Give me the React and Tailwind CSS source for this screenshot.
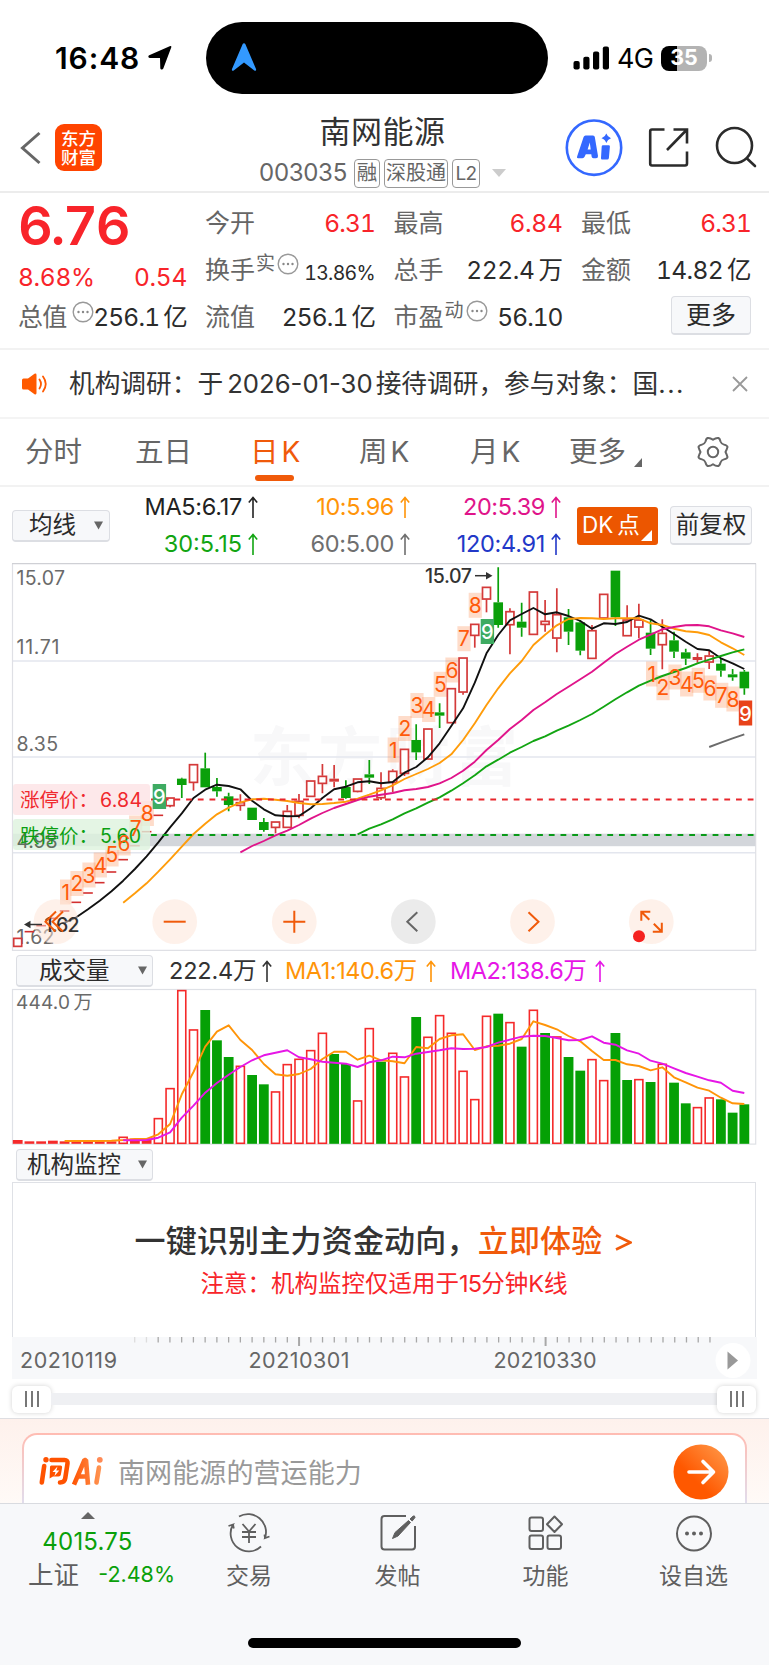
import React from "react";

const STEP = 11.72;
const cx = (i) => 17.7 + STEP * i;
const py = (v) => 560 + v / 3;
const vy = (v) => 940 + v / 3;

// [index, direction, high, bodyTop, bodyBottom, low]
const CANDLES = [
  [0, "r", 1133, 1133, 1160, 1160],
  [13, "r", 712, 712, 738, 742],
  [14, "g", 653, 656, 675, 714],
  [15, "r", 612, 612, 668, 692],
  [16, "g", 578, 625, 682, 682],
  [17, "g", 654, 681, 694, 710],
  [18, "g", 698, 709, 735, 754],
  [19, "r", 703, 726, 737, 752],
  [20, "g", 743, 743, 780, 780],
  [21, "g", 774, 786, 810, 815],
  [22, "r", 784, 784, 803, 820],
  [23, "r", 735, 752, 803, 803],
  [24, "r", 702, 722, 767, 775],
  [25, "r", 661, 661, 710, 710],
  [26, "r", 612, 647, 671, 700],
  [27, "s", 615, 656, 665, 682],
  [28, "g", 661, 681, 714, 716],
  [29, "r", 655, 655, 695, 697],
  [30, "g", 600, 643, 653, 672],
  [31, "r", 637, 683, 714, 720],
  [32, "r", 628, 632, 668, 696],
  [33, "r", 566, 566, 641, 648],
  [34, "g", 493, 540, 577, 600],
  [35, "r", 505, 505, 598, 598],
  [36, "g", 430, 457, 467, 504],
  [37, "r", 384, 384, 489, 489],
  [38, "r", 292, 292, 397, 404],
  [39, "r", 191, 191, 227, 263],
  [40, "r", 80, 80, 118, 157],
  [41, "g", 22, 127, 195, 203],
  [42, "r", 145, 153, 195, 283],
  [43, "g", 128, 185, 203, 230],
  [44, "r", 94, 94, 224, 224],
  [45, "r", 120, 182, 194, 215],
  [46, "r", 85, 162, 235, 277],
  [47, "g", 147, 172, 215, 255],
  [48, "g", 180, 187, 272, 286],
  [49, "r", 195, 210, 296, 296],
  [50, "r", 101, 101, 175, 175],
  [51, "g", 32, 32, 172, 198],
  [52, "r", 136, 178, 228, 228],
  [53, "r", 131, 178, 202, 235],
  [54, "g", 180, 218, 266, 285],
  [55, "r", 178, 218, 255, 328],
  [56, "g", 215, 241, 275, 294],
  [57, "g", 266, 277, 296, 315],
  [58, "s", 280, 291, 300, 308],
  [59, "r", 272, 286, 307, 327],
  [60, "g", 295, 311, 332, 350],
  [61, "g", 327, 343, 352, 362],
  [62, "g", 330, 335, 385, 404],
];

const FLAT = [1115, 1097, 1075, 1053, 1027, 999, 968, 936, 899, 857, 815, 766];

const MA = [
  { c: "#111111", s: 4, v: [1088, 1072, 1048, 1022, 994, 962, 927, 889, 847, 802, 760, 714, 689, 674, 678, 688, 722, 748, 766, 769, 768, 745, 714, 688, 680, 667, 664, 670, 666, 638, 621, 592, 550, 498, 445, 368, 280, 225, 181, 162, 144, 163, 157, 168, 183, 206, 190, 192, 186, 167, 178, 200, 222, 245, 267, 271, 295, 310, 327] },
  { c: "#ff9c0a", s: 9, v: [1028, 1000, 970, 935, 898, 860, 822, 791, 763, 743, 727, 718, 716, 719, 723, 729, 733, 732, 729, 725, 716, 704, 691, 676, 657, 642, 627, 609, 583, 540, 490, 435, 385, 340, 303, 255, 224, 196, 177, 174, 175, 177, 175, 175, 175, 190, 195, 206, 214, 217, 225, 247, 265, 285] },
  { c: "#e0148a", s: 19, v: [877, 858, 843, 826, 812, 795, 776, 759, 744, 732, 720, 710, 704, 699, 691, 687, 681, 670, 654, 632, 605, 570, 540, 507, 480, 450, 427, 402, 380, 358, 335, 308, 282, 260, 239, 224, 208, 201, 196, 195, 199, 211, 220, 231] },
  { c: "#12a512", s: 29, v: [823, 806, 793, 778, 760, 745, 728, 712, 692, 670, 646, 619, 599, 578, 561, 543, 529, 512, 497, 480, 462, 440, 418, 397, 377, 362, 348, 336, 324, 310, 299, 288, 277, 268] },
  { c: "#6b6b6b", s: 59, v: [561, 548, 535, 523] },
];

const VOL = [
  ["s", 600], ["s", 604], ["s", 604], ["s", 602], ["s", 604], ["s", 604], ["s", 604], ["s", 604], ["s", 604], ["r", 591],
  ["s", 596], ["s", 598], ["r", 535], ["r", 445], ["r", 151], ["r", 269], ["g", 210], ["g", 301], ["g", 351], ["r", 378],
  ["g", 405], ["g", 433], ["r", 455], ["r", 373], ["r", 357], ["r", 331], ["r", 279], ["g", 342], ["g", 372], ["r", 482],
  ["r", 265], ["g", 365], ["r", 339], ["r", 410], ["g", 231], ["r", 291], ["r", 226], ["r", 279], ["r", 393], ["r", 478],
  ["r", 228], ["g", 221], ["r", 247], ["g", 320], ["r", 210], ["g", 279], ["r", 290], ["g", 351], ["g", 392], ["r", 358],
  ["r", 421], ["g", 279], ["g", 420], ["r", 418], ["g", 426], ["r", 372], ["g", 428], ["g", 490], ["r", 502], ["r", 473],
  ["g", 478], ["g", 518], ["g", 493],
];

const VMA = [
  { c: "#ff9408", s: 4, v: [603, 603, 603, 603, 602, 600, 597, 597, 583, 552, 463, 396, 320, 275, 256, 300, 330, 372, 403, 407, 402, 387, 357, 335, 335, 359, 347, 361, 364, 370, 321, 325, 297, 286, 283, 330, 319, 317, 311, 297, 244, 255, 268, 288, 304, 333, 360, 360, 373, 378, 391, 382, 412, 427, 443, 452, 473, 490, 492] },
  { c: "#e616e6", s: 9, v: [601, 601, 600, 593, 577, 533, 497, 458, 429, 404, 381, 361, 346, 338, 331, 352, 358, 365, 368, 371, 381, 367, 361, 350, 352, 341, 336, 331, 325, 327, 326, 321, 308, 299, 290, 287, 288, 294, 301, 300, 289, 308, 314, 331, 341, 362, 371, 385, 399, 410, 421, 428, 452, 459] },
];

// [text, centre x, centre y]
const SEQ = [
  ["1", 65.7, 892], ["2", 77, 883.5], ["3", 89, 875], ["4", 100.3, 865], ["5", 112, 854], ["6", 124, 843], ["7", 135.7, 828], ["8", 147.3, 813.5],
  ["1", 393.3, 750], ["2", 405, 728.5], ["3", 417, 705.5], ["4", 428.7, 709.5], ["5", 440.3, 684.3], ["6", 452, 670], ["7", 464, 638.7], ["8", 475.3, 605.3],
  ["1", 651.7, 674], ["2", 663, 687.7], ["3", 675, 677], ["4", 686.7, 684], ["5", 698.3, 680.3], ["6", 710, 688], ["7", 721.7, 695.3], ["8", 733, 699],
];

const line = (m, f) => m.v.map((v, k) => `${cx(m.s + k).toFixed(1)},${f(v).toFixed(1)}`).join(" ");

function Round({ x, y = 921.7, fill = "#fef0e9", children }) {
  return (
    <g transform={`translate(${x} ${y})`} fill="none" strokeWidth="2" stroke="#f05a0a">
      <circle r="22.4" fill={fill} stroke="none" fillOpacity="0.94" />
      {children}
    </g>
  );
}

function PriceChart() {
  return (
    <svg viewBox="0 562 769 390" width="769" height="390" className="block shrink-0">
      <g fill="#f8f8f9" fontWeight="700" fontSize="64" fontFamily="'Noto Sans CJK SC'">
        <text x="250" y="780" textLength="268">东方财富</text>
      </g>
      <g stroke="#e3e6ee" strokeWidth="1.6">
        <path d="M12.5 661H756M12.5 757H756M12.5 852.8H756" />
      </g>
      <path d="M12.5 563.5V950.3H755.7V563.5" fill="none" stroke="#dfe0e5" strokeWidth="1.2" />
      <path d="M12 563.6H756" stroke="#cfd0d5" strokeWidth="1.3" />
      <rect x="13" y="833.7" width="742.5" height="12.5" fill="#d3d6db" />
      <g fill="#6a6a6a" fontSize="19.5">
        <text x="16.500" y="585.3" textLength="48.5">15.07</text>
        <text x="16.500" y="654.3" textLength="43">11.71</text>
        <text x="16.500" y="751.3" textLength="41.5">8.35</text>
        <text x="16.500" y="943.8" textLength="38">1.62</text>
      </g>
      {SEQ.map(([t, x, y], k) => (
        <rect key={k} x={x - (t === "1" ? 5.7 : 6.6)} y={y - 12.5} width={t === "1" ? 11.4 : 13.2} height="25" fill="#fb7c3c" fillOpacity="0.27" />
      ))}
      {FLAT.map((v, k) => (
        <path key={k} d={`M${cx(k + 1) - 4.8} ${py(v)}h9.6`} stroke="#d32f2f" strokeWidth="1.6" />
      ))}
      {CANDLES.map(([i, d, h, t, b, l]) => {
        const x = cx(i);
        const col = d === "g" ? "#0aa00a" : "#d43a3a";
        return (
          <g key={i} stroke={col} strokeWidth="1.7">
            <path d={`M${x} ${py(h)}V${py(t)}M${x} ${py(b)}V${py(l)}`} />
            {d === "r" ? (
              <rect x={x - 4} y={py(t) + 0.7} width="8" height={(b - t) / 3 - 1} fill="#fff" />
            ) : (
              <rect x={x - 4.8} y={py(t)} width="9.6" height={(b - t) / 3} fill={col} stroke="none" />
            )}
          </g>
        );
      })}
      {MA.map((m) => (
        <polyline key={m.c} points={line(m, py)} fill="none" stroke={m.c} strokeWidth="1.9" strokeLinejoin="round" />
      ))}
      <rect x="13" y="784" width="137" height="31" rx="3" fill="#fde4e6" fillOpacity="0.85" />
      <rect x="13" y="819" width="137" height="31" rx="3" fill="#ddf3dd" fillOpacity="0.8" />
      <text x="16.500" y="847.5" fill="#5f6f5f" fontSize="19.5" textLength="41">4.98</text>
      <path d="M151 799.5H755" stroke="#e8262c" strokeWidth="1.8" strokeDasharray="5.8 5.9" />
      <path d="M151 835H755" stroke="#0a9a1a" strokeWidth="1.8" strokeDasharray="5.8 5.9" />
      <g fontSize="19.5">
        <text x="20" y="807" fill="#f0282d">涨停价：</text>
        <text x="100" y="807" fill="#f0282d" textLength="42">6.84</text>
        <text x="20" y="843" fill="#0a9f12">跌停价：</text>
        <text x="100" y="843" fill="#0a9f12" textLength="41">5.60</text>
      </g>
      <g fontSize="21" fill="#ff5a0a" textAnchor="middle">
        {SEQ.map(([t, x, y], k) => (
          <text key={k} x={x} y={y + 7.5}>{t}</text>
        ))}
      </g>
      <rect x="152.7" y="784" width="13.4" height="25" fill="#3eab62" />
      <rect x="480.7" y="619" width="13.4" height="25" fill="#3eab62" />
      <rect x="738.8" y="700.5" width="13.4" height="25" fill="#e8431a" />
      <g fontSize="20" fill="#fff" textAnchor="middle" fontWeight="500">
        <text x="159.4" y="803.5">9</text>
        <text x="487.4" y="639">9</text>
        <text x="745.5" y="720.5">9</text>
      </g>
      <text x="425" y="583" fontSize="19.5" fontWeight="500" fill="#333" textLength="47">15.07</text>
      <path d="M475 575.7H490" stroke="#333" strokeWidth="1.5" />
      <path d="M486 572l6.500 3.7-6.500 3.7z" fill="#333" />
      <circle cx="56" cy="921.7" r="22.4" fill="#fde3d6" fillOpacity="0.5" />
      <text x="44.500" y="931.5" fontSize="19.5" fontWeight="500" fill="#333" textLength="35">1.62</text>
      <path d="M28 924.5H42" stroke="#333" strokeWidth="1.5" />
      <path d="M30.500 920.7l-6.500 3.8 6.500 3.8z" fill="#333" />
      <g stroke="#f05a0a" strokeWidth="2" fill="none">
        <path d="M56 911.5L45.500 921.7L55.500 931.500M63 911.5L52.500 921.7L63 931.500" />
      </g>
      <Round x={174.7}><path d="M-11 0H11" /></Round>
      <Round x={294.3}><path d="M-11 0H11M0 -11V11" /></Round>
      <Round x={413.3} fill="#eaeaea"><path d="M4 -9.5L-6 0L4 9.5" stroke="#666" /></Round>
      <Round x={532.5}><path d="M-4 -9.5L6 0L-4 9.5" /></Round>
      <Round x={651.3}><path d="M-10 -1V-10H-1M-10 -10L-2 -2M10.500 1V10H1.500M10.500 10L2.500 2" /></Round>
      <circle cx="639" cy="936.2" r="6" fill="#f5221f" />
    </svg>
  );
}

function VolumeChart() {
  return (
    <svg viewBox="0 988 769 158" width="769" height="158" className="block shrink-0">
      <rect x="12.5" y="989.5" width="743.2" height="154.6" fill="none" stroke="#dfe1e6" strokeWidth="1.2" />
      <text x="16" y="1008.500" fontSize="19" fill="#6a6a6a" textLength="54">444.0</text>
      <text x="73.500" y="1008.500" fontSize="19" fill="#6a6a6a">万</text>
      {VOL.map(([d, t], i) => {
        const x = cx(i);
        const y = vy(t);
        if (d === "r") return <rect key={i} x={x - 4} y={y + 0.3} width="8" height={1143 - y} fill="#fff" stroke="#f52a2a" strokeWidth="1.6" />;
        return <rect key={i} x={x - 4.9} y={y} width="9.8" height={1143.800 - y} fill={d === "g" ? "#05a005" : "#f52a2a"} />;
      })}
      {VMA.map((m) => (
        <polyline key={m.c} points={line(m, vy)} fill="none" stroke={m.c} strokeWidth="1.9" strokeLinejoin="round" />
      ))}
    </svg>
  );
}

function Dots() {
  return (
    <svg width="22" height="22" viewBox="0 0 22 22" className="block shrink-0">
      <circle cx="11" cy="11" r="9.8" fill="none" stroke="#999" strokeWidth="1.4" />
      <circle cx="6.500" cy="11" r="1.2" fill="#888" />
      <circle cx="11" cy="11" r="1.2" fill="#888" />
      <circle cx="15.500" cy="11" r="1.2" fill="#888" />
    </svg>
  );
}

function Cell({ label, sup, dots, value, unit, valueClass }) {
  return (
    <div className="flex h-full items-center justify-between whitespace-nowrap">
      <span className="flex items-center text-[25px] leading-none text-[#666]">
        {label}
        {sup && <span className="mb-[14px] ml-[1px] text-[19px] leading-none">{sup}</span>}
        {dots && <span className={sup ? "mb-[14px] ml-[2px] -mr-8" : "mb-[11px] ml-[6px] -mr-8"}><Dots /></span>}
      </span>
      <span className={valueClass}>{value}{unit && <span className="ml-[4px]">{unit}</span>}</span>
    </div>
  );
}

const DARK = "text-[24.5px] leading-none text-[#2b2b2b]";
const RED = "text-[24.5px] leading-none text-[#f8242a]";

function Dropdown({ className, children }) {
  return (
    <div className={"flex shrink-0 items-center justify-between rounded-[4px] border border-[#dcdee3] border-b-2 bg-[#f7f8fa] text-[#2b2b2b] " + className}>
      {children}
      <svg width="9" height="9" viewBox="0 0 9 9" className="block"><path d="M0 .5H9L4.500 8.500z" fill="#666" /></svg>
    </div>
  );
}

function Up() {
  return (
    <svg width="10" height="22" viewBox="0 0 10 22" fill="none" stroke="currentColor" strokeWidth="1.600" className="ml-[6px] block shrink-0">
      <path d="M5 22V1.500M.8 6.500L5 1.500L9.200 6.500" />
    </svg>
  );
}

function MaValue({ className, children }) {
  return (
    <span className={"flex items-center justify-end whitespace-nowrap text-[23.5px] leading-none " + className}>
      {children}
      <Up />
    </span>
  );
}

function Tab({ className, children }) {
  return <div className={"flex h-full items-center whitespace-nowrap text-[28.5px] leading-none text-[#666] " + className}>{children}</div>;
}

function Handle() {
  return (
    <div className="flex h-[27px] w-[39px] items-center justify-center gap-[4px] rounded-[6px] bg-white shadow-[0_0_5px_rgba(0,0,0,0.18)]">
      <i className="h-[16px] w-[2px] bg-[#777]" />
      <i className="h-[16px] w-[2px] bg-[#777]" />
      <i className="h-[16px] w-[2px] bg-[#777]" />
    </div>
  );
}

const TICKS = Array.from({ length: 50 }, (_, k) => 134.700 + k * 11.740);

export default function App() {
  return (
    <div className="flex h-[1665px] w-[769px] flex-col overflow-hidden bg-white font-['Inter','Noto_Sans_CJK_SC',sans-serif]">
      {/* status bar */}
      <div className="flex h-[116px] shrink-0 pt-[22px]">
        <div className="flex h-[72px] w-[206px] items-center pl-[55px]">
          <span className="w-[93px] text-[30px] font-semibold leading-none tracking-[0.900px] text-black">16:48</span>
          <svg width="24" height="24" viewBox="0 0 24 24" className="mb-[1px] block"><path d="M23.300 1.200L15.300 22.500c-.5 1.400-2.900 1.200-3-.3L12 12H1.800C.1 12-.1 9.900 1.200 9.200L21.700.2c1.100-.5 2 .1 1.600 1z" fill="#000" /></svg>
        </div>
        <div className="flex h-[72px] w-[342px] items-center rounded-[36px] bg-black pl-[24.500px]">
          <svg width="26" height="28" viewBox="0 0 26 28" className="mb-[2px] block"><path d="M11.700 1c.5-1.100 2.100-1.100 2.600 0L25 26c.5 1.400-.6 2.300-1.700 1.400L13 19.500 2.700 27.400C1.600 28.300.5 27.400 1 26z" fill="#3399ff" /></svg>
        </div>
        <div className="flex h-[72px] items-center pl-[24.500px]">
          <svg width="37" height="24" viewBox="0 0 37 24" className="block">
            <rect x=".5" y="15" width="6.200" height="8.500" rx="2" /><rect x="10.300" y="10.800" width="6.200" height="12.700" rx="2" /><rect x="20" y="5.500" width="6.200" height="18" rx="2" /><rect x="29.800" y=".5" width="6.200" height="23" rx="2" />
          </svg>
          <span className="ml-[7.500px] w-[37px] text-[27px] leading-none tracking-[-0.700px]">4G</span>
          <div className="ml-[7px] flex h-[25px] w-[46px] items-center justify-center rounded-[8px] bg-[linear-gradient(90deg,#000_35%,#b3b3b3_35%)] text-[21.500px] font-bold leading-none text-white">35</div>
          <span className="ml-[1.500px] h-[8px] w-[3px] rounded-r-full bg-[#b3b3b3]" />
        </div>
      </div>

      {/* title bar */}
      <div className="flex h-[77px] shrink-0 border-b-[2px] border-[#ececec]">
        <div className="flex w-[232px] items-center pl-[20px] pb-[14px] pt-[2px]">
          <svg width="22" height="34" viewBox="0 0 22 34" className="block"><path d="M19.500 2L2.500 17L19.500 32" fill="none" stroke="#666" strokeWidth="3" /></svg>
          <div className="ml-[13px] flex h-[47px] w-[47px] flex-col items-center justify-center rounded-[9px] bg-[#ff4400] text-[17.500px] font-medium leading-[19px] text-white">
            <span>东方</span><span>财富</span>
          </div>
        </div>
        <div className="flex w-[301px] flex-col items-center">
          <div className="flex h-[30px] items-center text-[31px] leading-none tracking-[0.500px] text-[#333]">南网能源</div>
          <div className="mt-[12px] flex h-[30px] items-center text-[#666]">
            <span className="mr-[7px] text-[24px] leading-none tracking-[-0.300px]">003035</span>
            <span className="flex h-[29px] w-[26px] items-center justify-center rounded-[4px] border-[1.500px] border-[#999] text-[20.500px] leading-none">融</span>
            <span className="ml-[4px] flex h-[29px] w-[64px] items-center justify-center rounded-[4px] border-[1.500px] border-[#999] text-[20px] leading-none">深股通</span>
            <span className="ml-[4px] flex h-[29px] w-[28px] items-center justify-center rounded-[4px] border-[1.500px] border-[#999] text-[19px] leading-none tracking-[-0.800px]">L2</span>
            <svg width="14" height="8" viewBox="0 0 14 8" className="ml-[12px] block"><path d="M0 0H14L7 8z" fill="#ccc" /></svg>
          </div>
        </div>
        <div className="flex items-start pl-[32px]">
          <svg width="60" height="60" viewBox="0 0 60 60" className="mt-[2px] block">
            <circle cx="29" cy="29.700" r="27.200" fill="none" stroke="#3468ff" strokeWidth="2.600" />
            <g fill="#3468ff">
              <path fillRule="evenodd" d="M20.500 17.500H28Q29.500 17.500 29.800 19L33 38Q33.200 40.200 31 40.200H28.500Q26.800 40.200 26.600 38.600L26.300 36.200H20.800L19.600 38.800Q19 40.200 17.400 40.200H13Q11.400 40.200 12.100 38.600L18.600 19Q19.200 17.500 20.500 17.500zM22.600 31.500H25.700L24.800 24.500z" />
              <path d="M38 27.200H43.600Q45 27.200 44.900 28.600L43.900 40Q43.700 41.600 42.200 41.600H37.200Q35.800 41.600 36 40.100L36.700 28.400Q36.800 27.200 38 27.200z" />
              <path d="M41.300 15.500Q42.500 19 46 20.200Q42.500 21.400 41.300 25Q40.200 21.400 36.500 20.200Q40.200 19 41.300 15.500z" />
            </g>
          </svg>
          <svg width="42" height="42" viewBox="0 0 42 42" fill="none" stroke="#2b2b2b" strokeWidth="2.600" className="ml-[23px] mt-[11px] block">
            <path d="M16.500 2.500H4Q2.200 2.500 2.200 4.300V36.500Q2.200 38.500 4 38.500H37Q39 38.500 39 36.500V24.500M25.500 2.500H39V16.500M38.500 3L19 23" />
          </svg>
          <svg width="42" height="42" viewBox="0 0 42 42" fill="none" stroke="#2b2b2b" strokeWidth="2.600" className="ml-[25px] mt-[10px] block">
            <circle cx="19.500" cy="19.500" r="17.500" /><path d="M32 32.500L40 40" strokeLinecap="round" />
          </svg>
        </div>
      </div>

      {/* quote */}
      <div className="flex h-[157px] shrink-0 border-b-[2px] border-[#f2f2f2] tabular-nums">
        <div className="flex w-[205px] flex-col pl-[18px] pr-[18px]">
          <div className="mt-[6px] flex h-[54px] items-center text-[54px] font-semibold leading-none tracking-[-2.200px] text-[#f8242a]">6.76</div>
          <div className="mt-[7px] flex h-[34px] items-center justify-between text-[24.500px] leading-none tracking-[-0.300px] text-[#f8242a]"><span>8.68%</span><span>0.54</span></div>
          <div className="mt-[7px] h-[32px] tracking-[-0.800px]"><Cell label="总值" dots value="256.1" unit="亿" valueClass={DARK} /></div>
        </div>
        <div className="grid w-[546px] grid-cols-[170px_169px_170px] grid-rows-[47px_47px_47px] gap-x-[18.500px] pt-[7px]">
          <Cell label="今开" value="6.31" valueClass={RED + " tracking-[-0.900px]"} />
          <Cell label="最高" value="6.84" valueClass={RED + " tracking-[-0.300px]"} />
          <Cell label="最低" value="6.31" valueClass={RED + " tracking-[-0.900px]"} />
          <Cell label="换手" sup="实" dots value="13.86%" valueClass="mt-[6px] text-[19.500px] leading-none tracking-[-0.700px] text-[#2b2b2b]" />
          <Cell label="总手" value="222.4" unit="万" valueClass={DARK + " tracking-[-0.400px]"} />
          <Cell label="金额" value="14.82" unit="亿" valueClass={DARK + " tracking-[-0.600px]"} />
          <Cell label="流值" value="256.1" unit="亿" valueClass={DARK + " tracking-[-0.900px]"} />
          <Cell label="市盈" sup="动" dots value="56.10" valueClass={DARK + " tracking-[-1px]"} />
          <div className="mb-[4px] flex h-[39px] w-[80px] items-center justify-center self-center justify-self-end rounded-[4px] border border-b-2 border-[#dcdee3] bg-[#f7f8fa] text-[25px] leading-none text-[#2b2b2b]">更多</div>
        </div>
      </div>

      {/* news */}
      <div className="flex h-[69px] shrink-0 items-center border-b-[2px] border-[#f4f4f4] pl-[22px] pr-[21px]">
        <svg width="26" height="22" viewBox="0 0 26 22" className="block shrink-0">
          <path d="M1.500 5.500H6L12.500 .8Q14.500 0 14.500 2V20Q14.500 22 12.500 21.200L6 16.500H1.500Q0 16.500 0 15V7Q0 5.500 1.500 5.500z" fill="#ff5a00" />
          <path d="M17.500 6.500Q20.500 11 17.500 15.500M21 3.500Q26.500 11 21 18.500" fill="none" stroke="#ff5a00" strokeWidth="1.800" strokeLinecap="round" />
        </svg>
        <div className="ml-[21px] flex w-[640px] items-center whitespace-nowrap text-[25.700px] leading-none text-[#333]">
          <span>机构调研：于</span><span className="ml-[4px] mr-[3px]">2026-01-30</span><span>接待调研，参与对象：国</span><span className="tracking-[1.500px]">...</span>
        </div>
        <svg width="16" height="16" viewBox="0 0 16 16" className="ml-auto block"><path d="M1 1L15 15M15 1L1 15" stroke="#999" strokeWidth="1.800" /></svg>
      </div>

      {/* period tabs */}
      <div className="flex h-[68px] shrink-0 items-stretch border-b-[2px] border-[#f2f2f2]">
        <Tab className="ml-[25px] w-[110px]">分时</Tab>
        <Tab className="w-[115px]">五日</Tab>
        <div className="flex w-[109px] flex-col text-[#f05a0a]">
          <div className="mt-[17px] flex h-[32px] items-center text-[28.500px] leading-none"><span>日</span><span className="ml-[3px] text-[28px]">K</span></div>
          <div className="ml-[5px] mt-[7px] h-[6px] w-[39px] rounded-full bg-[#f05a0a]" />
        </div>
        <Tab className="w-[111px]"><span>周</span><span className="ml-[3px] text-[28px]">K</span></Tab>
        <Tab className="w-[99px]"><span>月</span><span className="ml-[3px] text-[28px]">K</span></Tab>
        <Tab className="w-[128px]">更多<svg width="8" height="9" viewBox="0 0 8 9" className="ml-[8px] mt-[20px] block"><path d="M8 0V9H0z" fill="#666" /></svg></Tab>
        <div className="flex h-full items-center">
          <svg width="32" height="32" viewBox="0 0 32 32" fill="none" stroke="#666" strokeWidth="2" strokeLinejoin="round" className="block">
            <path d="M10.500 2Q13 1.500 16 3.800Q19 1.500 21.500 2Q23 2.800 23.500 5.500Q24.500 8 27 8.600Q30.500 9.500 30.500 11Q30 13 28.500 16Q30 19 30.500 21Q30.500 22.500 27 23.400Q24.500 24 23.500 26.500Q23 29.200 21.500 30Q19 30.500 16 28.200Q13 30.500 10.500 30Q9 29.200 8.500 26.500Q7.500 24 5 23.400Q1.500 22.500 1.500 21Q2 19 3.500 16Q2 13 1.500 11Q1.500 9.500 5 8.600Q7.500 8 8.500 5.500Q9 2.800 10.500 2z" />
            <circle cx="16" cy="16" r="5.200" />
          </svg>
        </div>
      </div>

      {/* moving averages */}
      <div className="flex h-[75px] shrink-0 items-center pl-[12px] pt-[2px]">
        <Dropdown className="h-[32px] w-[98px] pl-[16px] pr-[6px] text-[23.500px] leading-none">均线</Dropdown>
        <div className="grid w-[451px] grid-cols-[148px_152px_151px] grid-rows-[37px_37px]">
          <MaValue className="tracking-[-0.300px] text-[#222]">MA5:6.17</MaValue>
          <MaValue className="tracking-[-0.400px] text-[#ff9408]">10:5.96</MaValue>
          <MaValue className="tracking-[-0.400px] text-[#e0148a]">20:5.39</MaValue>
          <MaValue className="text-[#12a512]">30:5.15</MaValue>
          <MaValue className="tracking-[-0.300px] text-[#6f6f6f]">60:5.00</MaValue>
          <MaValue className="tracking-[-0.300px] text-[#2238c8]">120:4.91</MaValue>
        </div>
        <div className="ml-[16px] flex h-[38px] w-[81px] items-center rounded-[3px] bg-[#ec5600] pl-[5px] text-[22.500px] leading-none text-white">
          DK<span className="ml-[4px]">点</span>
          <svg width="11" height="11" viewBox="0 0 11 11" className="ml-[1px] mt-[20px] block"><path d="M11 0V11H0z" fill="#fff" /></svg>
        </div>
        <div className="ml-[12px] flex h-[39px] w-[82px] items-center justify-center rounded-[4px] border border-b-2 border-[#dcdee3] bg-[#f7f8fa] text-[23.500px] leading-none text-[#2b2b2b]">前复权</div>
      </div>

      <PriceChart />

      {/* volume header */}
      <div className="flex h-[36px] shrink-0 items-center whitespace-nowrap pl-[16px] pt-[2px] text-[23.500px] leading-none">
        <Dropdown className="h-[32px] w-[137px] pl-[22px] pr-[5px]">成交量</Dropdown>
        <span className="ml-[16px] flex w-[103px] items-center justify-between tracking-[-0.200px] text-[#333]">222.4万<Up /></span>
        <span className="ml-[13px] flex w-[151px] items-center justify-between tracking-[-0.450px] text-[#ff9408]">MA1:140.6万<Up /></span>
        <span className="ml-[14px] flex w-[155px] items-center justify-between tracking-[-0.450px] text-[#e616e6]">MA2:138.6万<Up /></span>
      </div>

      <VolumeChart />

      <div className="flex h-[36px] shrink-0 items-center pl-[16px] pt-[2px]">
        <Dropdown className="h-[32px] w-[137px] pl-[10px] pr-[5px] text-[23.500px] leading-none">机构监控</Dropdown>
      </div>

      {/* institution panel */}
      <div className="mx-[12px] flex h-[155px] w-[744px] shrink-0 flex-col items-center border border-b-0 border-[#dfe1e6] whitespace-nowrap">
        <div className="mt-[40px] flex h-[34px] items-center pr-[2px] text-[31px] font-medium leading-none tracking-[0.200px] text-[#333]">一键识别主力资金动向，<span className="text-[#f05a0a]">立即体验</span><svg width="17" height="17" viewBox="0 0 17 17" className="ml-[12px] mt-[5px] block"><path d="M1 1.500L15.500 8.500L1 15.500" fill="none" stroke="#f05a0a" strokeWidth="2.600" /></svg></div>
        <div className="mt-[12px] flex h-[30px] items-center text-[23.500px] leading-none text-[#f8242a]">注意：机构监控仅适用于<span className="tracking-[-0.800px]">15</span>分钟<span>K</span>线</div>
      </div>

      {/* date axis */}
      <svg viewBox="0 1337 769 42" width="769" height="42" className="block shrink-0">
        <rect x="12" y="1337" width="745" height="42" fill="#f7f8fa" />
        {TICKS.map((x, k) => (
          <path key={k} d={`M${x} 1337v${k === 14 || k === 35 ? 9 : 5.500}`} stroke={k < 2 ? "#ddd" : "#a8a8a8"} strokeWidth={k === 14 || k === 35 ? 2 : 1.300} />
        ))}
        <g fontSize="21.500" fill="#666">
          <text x="20" y="1367.500" textLength="97">20210119</text>
          <text x="248.500" y="1367.500" textLength="101">20210301</text>
          <text x="493.500" y="1367.500" textLength="103">20210330</text>
        </g>
        <circle cx="733" cy="1360.500" r="17.500" fill="#fff" />
        <path d="M727.500 1351.500V1369.500L738 1360.500z" fill="#999" />
      </svg>
      <div className="flex h-[39px] w-[768px] shrink-0 items-center px-[12px] pt-[1px]">
        <Handle /><div className="h-[12px] flex-1 bg-[#eff0f3]" /><Handle />
      </div>

      {/* ask */}
      <div className="h-[85px] shrink-0 overflow-hidden border-t border-[#dedee2] bg-[linear-gradient(#fef1ec,#fffaf7)] pl-[22px] pr-[22.500px] pt-[14px]">
        <div className="h-[90px] rounded-[15px] bg-[linear-gradient(#ffbcb2,#dfdff0_75px)] p-[2px]">
          <div className="flex h-[86px] items-start rounded-[13px] bg-white pl-[14px] pr-[16px]">
            <svg width="66" height="30" viewBox="0 0 66 30" className="mt-[21px] block">
              <defs><linearGradient id="ask" gradientUnits="userSpaceOnUse" x1="0" y1="15" x2="66" y2="12"><stop offset=".5" stopColor="#ff5200" /><stop offset="1" stopColor="#ff9c5c" /></linearGradient></defs>
              <g fill="none" stroke="url(#ask)" strokeWidth="4.600" strokeLinejoin="round" strokeLinecap="round">
                <path d="M6.200 10L3.800 26.500" /><path d="M13.500 4H26.500Q30 4 29.500 7.500L27.200 22.500Q26.600 26.500 22 26.500" />
                <path d="M36 28.700L46.500 4H48L50 28.700M40.500 20.500H49" strokeLinecap="butt" strokeLinejoin="bevel" />
                <path d="M61 11.500L58.500 26.500" />
              </g>
              <path d="M13.200 9.500H22.500Q24.400 9.500 24.100 11.400L22.900 18.500Q22.600 20.500 20.500 20.500H15L11.600 22.500L12 11Q12 9.500 13.200 9.500z" fill="#ff5200" />
              <path d="M19.500 10.500L14.500 16H17.500L16.500 20L21.300 14.500H18.300z" fill="#fff" />
              <circle cx="8" cy="3.800" r="2.700" fill="#ff5200" /><circle cx="61.800" cy="3.800" r="2.900" fill="#ff8a55" />
            </svg>
            <span className="ml-[14px] mt-[25px] text-[27px] leading-none tracking-[0.100px] text-[#999]">南网能源的营运能力</span>
            <svg width="56" height="56" viewBox="0 0 56 56" className="ml-auto mt-[9px] block">
              <defs><linearGradient id="go" x1=".2" y1=".7" x2=".8" y2=".1"><stop offset=".2" stopColor="#ff5800" /><stop offset="1" stopColor="#ff8d3c" /></linearGradient></defs>
              <circle cx="28" cy="28" r="27.500" fill="url(#go)" />
              <path d="M16 28H40M30 17.500L40.500 28L30 38.500" fill="none" stroke="#fff" strokeWidth="3.600" strokeLinecap="round" strokeLinejoin="round" />
            </svg>
          </div>
        </div>
      </div>

      {/* bottom bar */}
      <div className="flex h-[162px] shrink-0 flex-col items-center border-t-[1.500px] border-[#d9dbe0] bg-[#f7f8fa]">
        <div className="flex h-[100px] w-full whitespace-nowrap text-[23px] leading-none text-[#5f5f5f]">
          <div className="flex w-[176px] flex-col items-center pt-[8px]">
            <svg width="14" height="7" viewBox="0 0 14 7" className="block"><path d="M0 7L7 0L14 7z" fill="#666" /></svg>
            <div className="mt-[11px] flex h-[24px] items-center pr-[1px] text-[24px] tracking-[0.200px] text-[#0aa00a]">4015.75</div>
            <div className="mt-[8px] ml-[27px] flex h-[26px] w-[147px] items-center justify-between text-[25.500px]"><span>上证</span><span className="text-[21.500px] text-[#0aa00a]">-2.48%</span></div>
          </div>
          <div className="flex w-[146px] flex-col items-center pt-[8px]">
            <svg width="44" height="42" viewBox="0 0 44 42" fill="none" stroke="#5f5f5f" strokeWidth="1.800" className="block">
              <path d="M12 4.500A18 18 0 0 1 38 26L42.500 24.500M38 26L37.500 22.500M34 34.500A18 18 0 0 1 6 12.500L1.500 14M6 12.500L6.800 16.500" />
              <path d="M15.500 12L22 19.500L28.500 12M22 19.500V31M15 20H29M15 25H29" />
            </svg>
            <div className="mt-[11px]">交易</div>
          </div>
          <div className="flex w-[151px] flex-col items-center pt-[8px]">
            <svg width="38" height="42" viewBox="0 0 38 42" className="block">
              <path d="M27 4H5.500Q2.500 4 2.500 7V34.500Q2.500 37.500 5.500 37.500H33Q36 37.500 36 34.500V14" fill="none" stroke="#5f5f5f" strokeWidth="2" />
              <path d="M13.500 26.500L16 20.500L29.500 8.500L31.500 10.500L19 24zM31 7L34 4.200Q35.800 3 36 5.500L33.200 9z" fill="#5f5f5f" stroke="#5f5f5f" strokeWidth="1" />
            </svg>
            <div className="mt-[11px]">发帖</div>
          </div>
          <div className="flex w-[145px] flex-col items-center pt-[8px]">
            <svg width="38" height="42" viewBox="0 0 38 42" fill="none" stroke="#5f5f5f" strokeWidth="2" strokeLinejoin="round" className="block">
              <rect x="2.500" y="5.500" width="13.500" height="13.500" rx="2" /><rect x="2.500" y="23.500" width="13.500" height="13.500" rx="2" /><rect x="20.500" y="23.500" width="13.500" height="13.500" rx="2" />
              <path d="M27.500 4.500L35 12.200L27.500 20L20 12.200z" />
            </svg>
            <div className="mt-[11px]">功能</div>
          </div>
          <div className="flex w-[151px] flex-col items-center pt-[8px]">
            <svg width="38" height="42" viewBox="0 0 38 42" className="block">
              <circle cx="19" cy="21.500" r="17" fill="none" stroke="#5f5f5f" strokeWidth="2" />
              <g fill="#5f5f5f"><circle cx="12" cy="21.500" r="2" /><circle cx="19" cy="21.500" r="2" /><circle cx="26" cy="21.500" r="2" /></g>
            </svg>
            <div className="mt-[11px]">设自选</div>
          </div>
        </div>
        <div className="mt-[34px] h-[10px] w-[273px] rounded-full bg-black" />
      </div>
    </div>
  );
}
